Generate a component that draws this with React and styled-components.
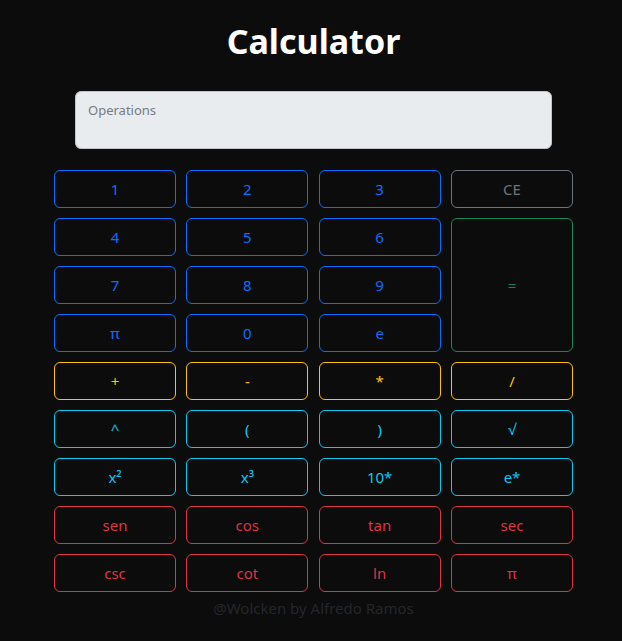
import React, { useState } from "react";
import styled, { createGlobalStyle } from "styled-components";

const GlobalStyle = createGlobalStyle`
  html, body {
    margin: 0;
    padding: 0;
    background: #0c0c0c;
  }
  body {
    font-family: "Noto Sans", "Open Sans", sans-serif;
  }
`;

const colors = {
  primary: "#0d6efd",
  secondary: "#6c757d",
  success: "#198754",
  warning: "#ffc107",
  info: "#0dcaf0",
  danger: "#dc3545",
};

const Page = styled.div`
  min-height: 641px;
  padding: 21px 0 0 5px;
  box-sizing: border-box;
  display: flex;
  flex-direction: column;
  align-items: center;
`;

const Title = styled.h1`
  margin: 0 0 30px;
  color: #ffffff;
  font-size: 34px;
  font-weight: 700;
  line-height: 40px;
`;

const Wrapper = styled.div`
  width: 519px;
  display: flex;
  flex-direction: column;
  align-items: center;
`;

const Display = styled.textarea`
  width: 477px;
  height: 58px;
  box-sizing: border-box;
  margin: 0 0 21px;
  padding: 9px 12px;
  resize: none;
  border: 1px solid #bfc4c9;
  border-radius: 6px;
  background: #e9ecef;
  color: #212529;
  font-family: inherit;
  font-size: 13px;
  outline: none;

  &::placeholder {
    color: #747b82;
  }
`;

const Grid = styled.div`
  width: 100%;
  display: grid;
  grid-template-columns: repeat(4, 1fr);
  grid-auto-rows: 38px;
  column-gap: 10.33px;
  row-gap: 10px;
`;

const Key = styled.button`
  grid-row: ${(p) => (p.$tall ? "span 3" : "auto")};
  background: transparent;
  border: 1px solid ${(p) => colors[p.$variant]};
  border-radius: 6px;
  color: ${(p) => colors[p.$variant]};
  font-family: inherit;
  font-size: 15px;
  cursor: pointer;
  padding: 0;

  &:hover {
    background: ${(p) => colors[p.$variant]};
    color: #0c0c0c;
  }
`;

const Footer = styled.p`
  margin: 6px 0 0;
  color: #23272c;
  font-size: 15px;
`;

const keys = [
  { label: "1", v: "primary" },
  { label: "2", v: "primary" },
  { label: "3", v: "primary" },
  { label: "CE", v: "secondary" },
  { label: "4", v: "primary" },
  { label: "5", v: "primary" },
  { label: "6", v: "primary" },
  { label: "=", v: "success", tall: true },
  { label: "7", v: "primary" },
  { label: "8", v: "primary" },
  { label: "9", v: "primary" },
  { label: "π", v: "primary" },
  { label: "0", v: "primary" },
  { label: "e", v: "primary" },
  { label: "+", v: "warning" },
  { label: "-", v: "warning" },
  { label: "*", v: "warning" },
  { label: "/", v: "warning" },
  { label: "^", v: "info" },
  { label: "(", v: "info" },
  { label: ")", v: "info" },
  { label: "√", v: "info" },
  { label: "x²", v: "info" },
  { label: "x³", v: "info" },
  { label: "10*", v: "info" },
  { label: "e*", v: "info" },
  { label: "sen", v: "danger" },
  { label: "cos", v: "danger" },
  { label: "tan", v: "danger" },
  { label: "sec", v: "danger" },
  { label: "csc", v: "danger" },
  { label: "cot", v: "danger" },
  { label: "ln", v: "danger" },
  { label: "π", v: "danger" },
];

const App = () => {
  const [expr, setExpr] = useState("");

  const handleKey = (label) => {
    if (label === "CE") return setExpr("");
    if (label === "=") return;
    setExpr(expr + label);
  };

  return (
    <>
      <GlobalStyle />
      <Page>
        <Title>Calculator</Title>
        <Wrapper>
          <Display
            placeholder="Operations"
            value={expr}
            readOnly
          />
          <Grid>
            {keys.map((k, i) => (
              <Key
                key={i}
                $variant={k.v}
                $tall={k.tall}
                onClick={() => handleKey(k.label)}
              >
                {k.label}
              </Key>
            ))}
          </Grid>
          <Footer>@Wolcken by Alfredo Ramos</Footer>
        </Wrapper>
      </Page>
    </>
  );
};

export default App;
